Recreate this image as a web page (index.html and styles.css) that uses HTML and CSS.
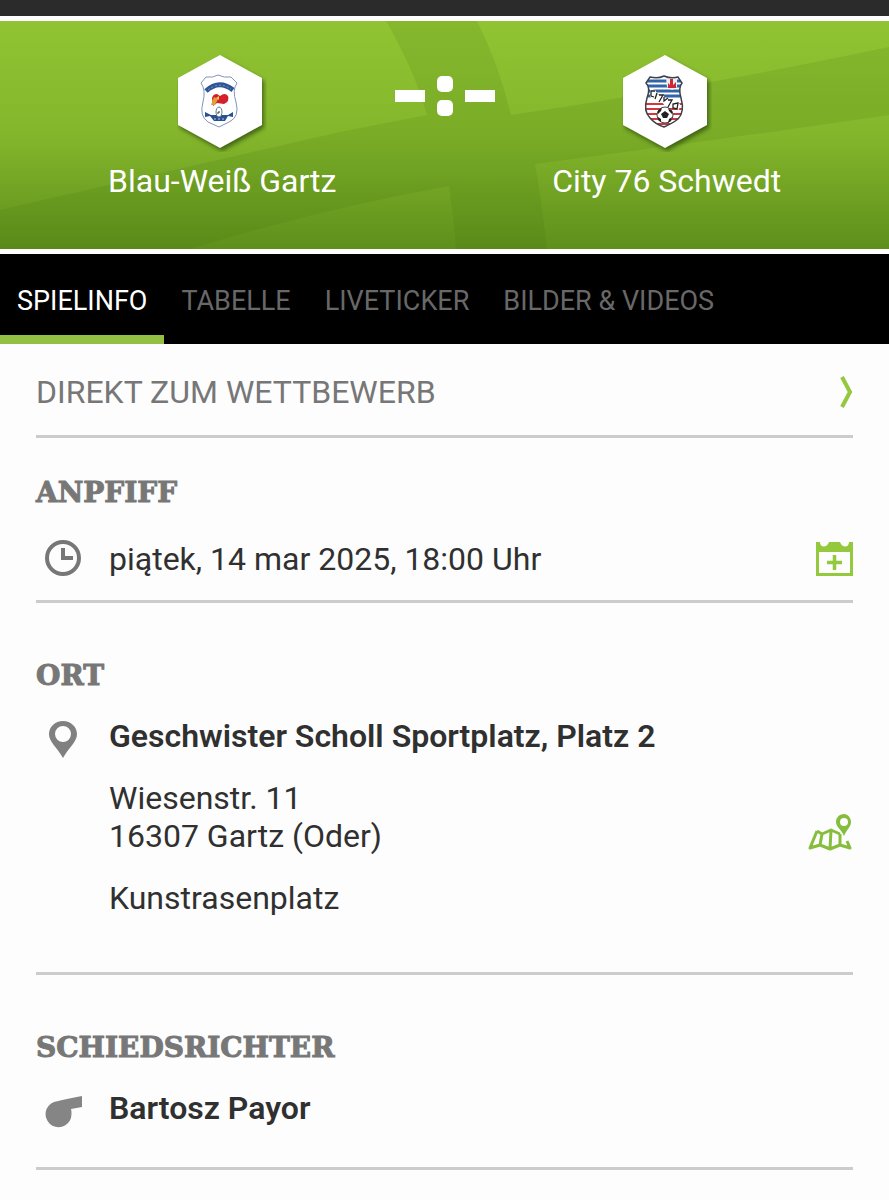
FILE: index.html
```html
<!DOCTYPE html>
<html lang="de">
  <head>
    <title>Blau-Weiß Gartz - City 76 Schwedt</title>
    <meta charset="utf-8">
    <meta name="viewport" content="width=device-width, initial-scale=1">
    <link rel="stylesheet" href="styles.css">
  </head>
  <body>

  <div class="statusbar"></div>

  <header class="stage">
    <svg class="stage-bg" viewBox="0 0 889 228" preserveAspectRatio="none" aria-hidden="true">
      <path d="M386 0H477Q499 44 511 94Q700 66 889 26V94Q710 120 535 143Q542 184 547 228H456Q454 198 449 165Q320 188 190 228H0V189Q170 150 340 111L427 94Q415 50 386 0Z"/>
    </svg>

    <div class="team home">
      <svg class="crest" viewBox="0 0 90 100" aria-hidden="true">
        <path class="hexagon" d="M43 3L85 26V73L43 96L1 73V26Z"/>
        <path d="M29 25Q36 26 41 23Q47 26 54 25L60 31Q55 38 59 50Q63 65 52 70L42 75L31 70Q22 64 26 50Q29 38 24 31Z" fill="#fff" stroke="#8294b8"/>
        <path d="M29 39Q42 27 56 38" fill="none" stroke="#2d5598" stroke-width="5"/>
        <path d="M31 38Q42 29 54 37" fill="none" stroke="#7b98c5" stroke-dasharray="2 2"/>
        <path d="M35 46Q36 42 40 42L43 44Q48 40 51 44Q53 49 47 52L40 51L36 54Z" fill="#d5202b"/>
        <path d="M34 53L37 45L41 47L38 53Z" fill="#dda137"/>
        <path d="M39 46L42 44L42 48Z" fill="#f1cf4c"/>
        <path d="M28 60L34 63H51L56 60V65L51 64L48 69H37L33 64L28 65Z" fill="#28518f"/>
        <ellipse cx="42" cy="60" rx="3" ry="5" fill="#fff" stroke="#647a8a"/>
        <path d="M43 60H41V62" fill="none" stroke="#333"/>
        <path d="M37 67H48" stroke="#b8c7df" stroke-dasharray="2 2"/>
      </svg>
      <span class="team-name">Blau-Weiß Gartz</span>
    </div>

    <div class="score" role="img" aria-label="Noch kein Ergebnis">
      <span class="dash"></span>
      <span class="colon"><i></i><i></i></span>
      <span class="dash"></span>
    </div>

    <div class="team away">
      <svg class="crest" viewBox="0 0 90 100" aria-hidden="true">
        <defs>
          <clipPath id="shield">
            <path d="M28 25Q36 27 42 24Q49 27 56 25L60 31Q56 36 59 46Q63 60 56 67Q51 71 42 75Q33 72 28 66Q21 59 25 46Q29 36 24 31Z"/>
          </clipPath>
        </defs>
        <path class="hexagon" d="M43 3L85 26V73L43 96L1 73V26Z"/>
        <g clip-path="url(#shield)">
          <path d="M20 22H65V77H20Z" fill="#fff"/>
          <path d="M20 29H65M20 34H65M20 39H65M20 44H65" stroke="#3265a7" stroke-width="3"/>
          <path d="M20 52H65M20 57H65M20 62H65M20 67H65M20 72H65" stroke="#d5353d" stroke-width="2"/>
          <path d="M44 26H55V35L50 38L45 35Z" fill="#eee"/>
          <path d="M46 36V31L48 33V27H51V33L54 30V36Z" fill="#cf2738"/>
          <path d="M28 36L33 38L36 43L40 41L44 48L49 46L58 52L57 58L50 55L45 57L40 50L35 51L28 45Z" fill="#fff"/>
          <path d="M33 39L29 39L29 44L32 45M35 41L33 47M37 43H41L37 50M42 45L42 49L46 46M46 48H50L46 55M56 51L51 52L51 56L55 57Z" fill="none" stroke="#222" stroke-width="1.3"/>
        </g>
        <circle cx="43" cy="63" r="8" fill="#fff" stroke="#444"/>
        <path d="M43 59L47 62L45 66H41L39 62ZM36 58L40 56L39 59L36 62ZM46 56L50 59L50 62L47 59ZM36 65L39 67V70L36 68ZM47 67L50 65L49 69L46 71Z" fill="#222"/>
        <path d="M28 25Q36 27 42 24Q49 27 56 25L60 31Q56 36 59 46Q63 60 56 67Q51 71 42 75Q33 72 28 66Q21 59 25 46Q29 36 24 31Z" fill="none" stroke="#39424d" stroke-width="1.5"/>
      </svg>
      <span class="team-name">City 76 Schwedt</span>
    </div>
  </header>

  <nav class="tabs">
    <a class="tab active" href="#spielinfo">SPIELINFO</a>
    <a class="tab" href="#tabelle">TABELLE</a>
    <a class="tab" href="#liveticker">LIVETICKER</a>
    <a class="tab" href="#bilder">BILDER &amp; VIDEOS</a>
  </nav>

  <main id="spielinfo">
    <a class="competition" href="#wettbewerb">
      DIREKT ZUM WETTBEWERB
      <svg class="chevron" viewBox="0 0 14 34" aria-hidden="true"><path d="M3 2L11 17L3 32"/></svg>
    </a>

    <section class="kickoff">
      <h2>ANPFIFF</h2>
      <div class="row">
        <svg class="icon" viewBox="0 0 38 38" aria-hidden="true">
          <circle cx="19" cy="18" r="16" fill="none" stroke="#777" stroke-width="4"/>
          <path d="M19 8V18H29" fill="none" stroke="#777" stroke-width="4"/>
        </svg>
        <p>piątek, 14 mar 2025, 18:00 Uhr</p>
        <button class="action" type="button" aria-label="Zum Kalender hinzufügen">
          <svg width="37" height="34" viewBox="0 0 37 34">
            <path d="M0 0H4C4 6 11 6 13 0H24C26 6 33 6 33 0H37V34H0ZM3 10V31H34V10Z" fill="#94c83d" fill-rule="evenodd"/>
            <path d="M18.500 13V28M11 20.500H26" stroke="#94c83d" stroke-width="3.500"/>
          </svg>
        </button>
      </div>
    </section>

    <section class="venue">
      <h2>ORT</h2>
      <div class="row">
        <svg class="icon" viewBox="0 0 38 38" aria-hidden="true">
          <path d="M19 1C11 1 5 7 5 14C5 22 13 27 19 38C25 27 33 22 33 14C33 7 27 1 19 1ZM19 6A8 8 0 1 1 19 22A8 8 0 1 1 19 6Z" fill="#808080" fill-rule="evenodd"/>
        </svg>
        <div class="address">
          <p><strong>Geschwister Scholl Sportplatz, Platz 2</strong></p>
          <p>Wiesenstr. 11<br>16307 Gartz (Oder)</p>
          <p>Kunstrasenplatz</p>
        </div>
        <button class="action" type="button" aria-label="Karte öffnen">
          <svg width="45" height="38" viewBox="0 0 45 38">
            <path d="M9 17L2 34L12 31L22 35L32 31L42 34L39 27M9 17L14 20L23 16L32 20M14 20L12 31M23 16L22 35M32 20V31" fill="none" stroke="#87bd3c" stroke-width="3" stroke-linejoin="round"/>
            <path d="M36 0C31 0 28 4 28 8C28 13 33 15 36 22C39 15 43 13 43 8C43 4 40 0 36 0ZM36 4A4 4 0 1 1 36 12A4 4 0 1 1 36 4Z" fill="#87bd3c" fill-rule="evenodd"/>
          </svg>
        </button>
      </div>
    </section>

    <section class="referee">
      <h2>SCHIEDSRICHTER</h2>
      <div class="row">
        <svg class="icon" viewBox="0 0 38 38" aria-hidden="true">
          <path d="M10 10Q22 7 38 4V15L27 17Q28 20 27 26A13 13 0 1 1 10 10Z" fill="#858585"/>
        </svg>
        <p><strong>Bartosz Payor</strong></p>
      </div>
    </section>
  </main>

  </body>
</html>
```

FILE: styles.css
```css
* {
  box-sizing: border-box;
}

body {
  margin: 0;
  background: #fdfdfd;
  color: #303030;
  font-family: Roboto, sans-serif;
  font-size: 32px;
  line-height: 38px;
}

p, h2 {
  margin: 0;
}

a {
  text-decoration: none;
}

strong {
  font-weight: 600;
}

.statusbar {
  height: 16px;
  background: #2b2b2c;
}

/* match header */

.stage {
  position: relative;
  display: grid;
  grid-template-columns: 1fr 1fr;
  padding: 31px 0 49px;
  border-top: 5px solid #fff;
  border-bottom: 5px solid #fff;
  background: linear-gradient(#91c432, #84b62c 50%, #5e8f1b);
  color: #fff;
}

.stage-bg {
  position: absolute;
  width: 100%;
  height: 100%;
  fill: rgba(65, 115, 15, 0.14);
}

.team {
  position: relative;
  grid-row: 1;
  display: flex;
  flex-direction: column;
  align-items: center;
  gap: 10px;
}

.home {
  grid-column: 1;
}

.away {
  grid-column: 2;
}

.crest {
  width: 90px;
  height: 100px;
}

.hexagon {
  fill: #fff;
  filter: drop-shadow(2px 3px 2px rgba(40, 70, 10, 0.7));
}

/* spans both team columns so it stays centered */
.score {
  position: relative;
  grid-row: 1;
  grid-column: 1 / -1;
  justify-self: center;
  display: flex;
  align-items: center;
  gap: 12px;
  height: 88px;
}

.dash {
  width: 30px;
  height: 12px;
  background: #fff;
}

.colon {
  display: grid;
  gap: 8px;
}

.colon i {
  width: 16px;
  height: 16px;
  border-radius: 5px;
  background: #fff;
}

/* tabs */

.tabs {
  display: flex;
  height: 90px;
  background: #000;
  font-size: 27px;
}

.tab {
  padding: 28px 17px 15px;
  border-bottom: 9px solid transparent;
  color: #686868;
  white-space: nowrap;
}

.tab.active {
  border-color: #93c043;
  color: #fff;
}

/* content */

main {
  padding: 0 36px;
}

.competition {
  display: flex;
  align-items: center;
  justify-content: space-between;
  height: 94px;
  padding-top: 4px;
  border-bottom: 3px solid #ccc;
  color: #777;
}

.chevron {
  width: 14px;
  height: 34px;
  fill: none;
  stroke: #94c83d;
  stroke-width: 4px;
}

section {
  border-bottom: 3px solid #ccc;
}

h2 {
  color: #777;
  font: bold 28px/38px "DejaVu Serif", serif;
  -webkit-text-stroke: 1px #777;
}

.row {
  display: flex;
  gap: 27px;
  padding-left: 8px;
}

.icon {
  flex: none;
  width: 38px;
  height: 38px;
}

.action {
  display: flex;
  margin-left: auto;
  padding: 0;
  border: 0;
  background: none;
  cursor: pointer;
}

.kickoff {
  padding: 36px 0 22px;
}

.kickoff .row {
  align-items: center;
  padding-top: 28px;
}

.venue {
  padding: 54px 0 55px;
}

.venue .row,
.referee .row {
  padding-top: 22px;
}

.venue .icon,
.referee .icon {
  margin-top: 3px;
}

.venue .action {
  align-self: center;
  padding-top: 32px;
}

.address {
  display: grid;
  gap: 24px;
}

.referee {
  padding: 54px 0 37px;
}
```
